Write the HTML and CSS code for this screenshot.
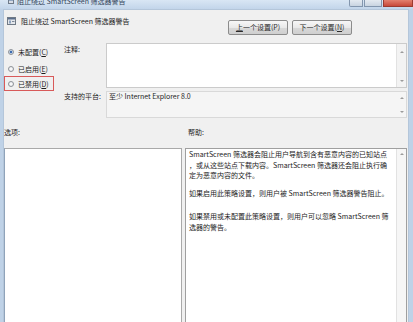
FILE: index.html
```html
<!DOCTYPE html>
<html lang="zh-CN">
<head>
    <meta charset="UTF-8">
    <title>阻止绕过 SmartScreen 筛选器警告</title>
    <link rel="stylesheet" href="styles.css">
</head>
<body>
    <div class="window">
        <!-- Title bar (mostly cut off at the top) -->
        <div class="titlebar">
            <svg class="app-icon" width="6" height="6" viewBox="0 0 6 6">
                <rect x="0.5" y="0.5" width="5" height="5" fill="#d8dde4" stroke="#6f7b8a"/>
                <rect x="1" y="1" width="4" height="1.5" fill="#4a6ea0"/>
            </svg>
            <span class="title">阻止绕过 SmartScreen 筛选器警告</span>
            <div class="controls">
                <span class="ctl min"></span>
                <span class="ctl max"></span>
                <span class="ctl close"></span>
            </div>
        </div>

        <div class="client">
            <div class="header">
                <div class="heading">
                    <svg class="policy-icon" width="9" height="8" viewBox="0 0 9 8">
                        <rect x="0.5" y="0.5" width="8" height="7" fill="#e4e7eb" stroke="#707a86"/>
                        <rect x="1" y="1" width="7" height="1.5" fill="#5b6f8c"/>
                        <rect x="2" y="3.5" width="2" height="3" fill="#8fa4bf"/>
                        <rect x="5" y="4" width="2.5" height="1" fill="#7a8696"/>
                    </svg>
                    <span>阻止绕过 SmartScreen 筛选器警告</span>
                </div>
                <div class="nav">
                    <button class="btn"><u>上</u>一个设置(P)</button>
                    <button class="btn">下一个设置(<u>N</u>)</button>
                </div>
            </div>

            <div class="settings">
                <div class="states">
                    <div class="radio checked"><span class="dot"></span>未配置(<u>C</u>)</div>
                    <div class="radio"><span class="dot"></span>已启用(<u>E</u>)</div>
                    <div class="radio marked"><span class="dot"></span>已禁用(<u>D</u>)</div>
                </div>

                <div class="field-label note-label">注释:</div>
                <div class="box note">
                    <div class="box-body"></div>
                    <div class="scroll"><i class="up"></i><i class="down"></i></div>
                </div>

                <div class="field-label">支持的平台:</div>
                <div class="box platform">
                    <div class="box-body">至少 Internet Explorer 8.0</div>
                    <div class="scroll"><i class="up"></i><i class="down"></i></div>
                </div>
            </div>

            <div class="panes">
                <div class="pane-label">选项:</div>
                <div class="pane-label help-label">帮助:</div>
                <div class="pane options"></div>
                <div class="pane help">
                    <div class="help-text">
                        <p>SmartScreen 筛选器会阻止用户导航到含有恶意内容的已知站点<br>，或从这些站点下载内容。SmartScreen 筛选器还会阻止执行确<br>定为恶意内容的文件。</p>
                        <p class="gap">如果启用此策略设置，则用户被 SmartScreen 筛选器警告阻止。</p>
                        <p>如果禁用或未配置此策略设置，则用户可以忽略 SmartScreen 筛<br>选器的警告。</p>
                    </div>
                    <div class="scroll"><i class="up"></i></div>
                </div>
            </div>
        </div>
    </div>
</body>
</html>
```

FILE: styles.css
```css
html, body {
    margin: 0;
    height: 100%;
    overflow: hidden;
}
body {
    font-family: "Noto Sans CJK SC", sans-serif;
    font-size: 7px;
    line-height: 10px;
    color: #1c1c1c;
    background: #bfd2e7;
}
.window {
    display: flex;
    flex-direction: column;
    height: 100vh;
}

/* title bar */
.titlebar {
    display: flex;
    align-items: flex-start;
    height: 9px;
    padding-left: 8px;
    overflow: hidden;
    background: linear-gradient(#d9e6f4, #c2d5ea);
}
.app-icon {
    margin-top: -2px;
}
.title {
    margin: -4px 0 0 3px;
    color: #34465a;
}
.controls {
    display: flex;
    margin-left: auto;
}
.ctl {
    height: 7px;
    box-sizing: border-box;
    border: 1px solid #8396ae;
    border-top: none;
    background: linear-gradient(#e4eaf1, #c9d4e1);
}
.ctl.min { width: 14px; margin-right: 1px; border-radius: 0 0 0 2px; }
.ctl.max { width: 18px; margin-right: 1px; }
.ctl.close {
    width: 30px;
    border-color: #9b3a30;
    background: linear-gradient(#e3806f, #c8493a);
}

/* client area */
.client {
    flex: 1;
    display: flex;
    flex-direction: column;
    margin: 0 4px 0 3px;
    border: 1px solid #b4c6da;
    border-bottom: none;
    background: #f0f0f0;
    overflow: hidden;
}
.header {
    display: flex;
    justify-content: space-between;
    align-items: flex-start;
    height: 33px;
    box-sizing: border-box;
    padding: 6px 56px 0 3px;
}
.heading {
    display: flex;
    align-items: center;
}
.policy-icon {
    margin-right: 5px;
}
.nav {
    display: flex;
    gap: 4px;
    margin-top: 4px;
}
.btn {
    width: 60px;
    height: 15px;
    padding: 0;
    font: inherit;
    line-height: 13px;
    color: #2a2a2a;
    border: 1px solid #8c8c8c;
    border-radius: 2px;
    background: linear-gradient(#f7f7f7, #e9e9e9 50%, #d9d9d9 51%, #cfcfcf);
}

/* settings grid */
.settings {
    display: grid;
    grid-template-columns: 58px 44px 1fr;
    grid-template-rows: 45px 27px;
    row-gap: 3px;
    padding-right: 1px;
}
.states {
    grid-row: 1 / span 2;
    display: flex;
    flex-direction: column;
}
.radio {
    display: flex;
    align-items: center;
    height: 15px;
    box-sizing: border-box;
    padding-left: 4px;
}
.radio:first-child { margin-top: 1px; }
.radio + .radio { margin-top: 2px; }
.radio.marked {
    margin-top: 0;
    width: 50px;
    padding-left: 3px;
    border: 1px solid #d85a5a;
}
.dot {
    width: 6px;
    height: 6px;
    box-sizing: border-box;
    margin-right: 4px;
    border: 1px solid #8e9399;
    border-radius: 50%;
    background: radial-gradient(#ffffff, #e2e4e7);
}
.checked .dot {
    background: radial-gradient(#3c6cb0 0 1.3px, #c8d6e8 1.6px, #e2e6eb);
}
.field-label {
    padding-left: 2px;
}
.note-label {
    padding-top: 1px;
}
.box {
    display: flex;
    box-sizing: border-box;
    border: 1px solid #cbcbcb;
}
.box-body {
    flex: 1;
}
.note .box-body {
    background: #fff;
}
.platform {
    background: #f5f5f5;
    border-color: #d9d9d9;
}
.platform .box-body {
    padding: 0 2px;
    line-height: 9px;
}

/* scrollbar stubs */
.scroll {
    display: flex;
    flex-direction: column;
    justify-content: space-between;
    align-items: center;
    width: 9px;
    padding: 7px 0 5px;
    background: #f3f3f3;
    border-left: 1px solid #e2e2e2;
}
.platform .scroll {
    padding: 5px 0 4px;
    background: none;
    border-left: none;
}
.scroll i {
    width: 0;
    height: 0;
    border-left: 2px solid transparent;
    border-right: 2px solid transparent;
}
.scroll .up { border-bottom: 2px solid #9b9b9b; }
.scroll .down { border-top: 2px solid #9b9b9b; }

/* lower panes */
.panes {
    flex: 1;
    display: grid;
    grid-template-columns: 178px 1fr;
    grid-template-rows: 10px 1fr;
    column-gap: 3px;
    row-gap: 11px;
    margin: 9px 0 -6px;
    padding-right: 1px;
}
.help-label {
    padding-left: 3px;
}
.pane {
    box-sizing: border-box;
    border: 1px solid #a9a9a9;
    background: #fff;
}
.options {
    border-left-color: #8fa3ba;
}
.help {
    display: flex;
    border-color: #9f9f9f;
}
.help-text {
    flex: 1;
    padding: 0 0 0 3px;
    line-height: 10.5px;
    white-space: nowrap;
}
.help-text p {
    margin: 0 0 7px;
}
.help-text p.gap {
    margin-bottom: 13px;
}
.help .scroll {
    padding-top: 4px;
    width: 9px;
    justify-content: flex-start;
    background: #f6f6f6;
}
```
